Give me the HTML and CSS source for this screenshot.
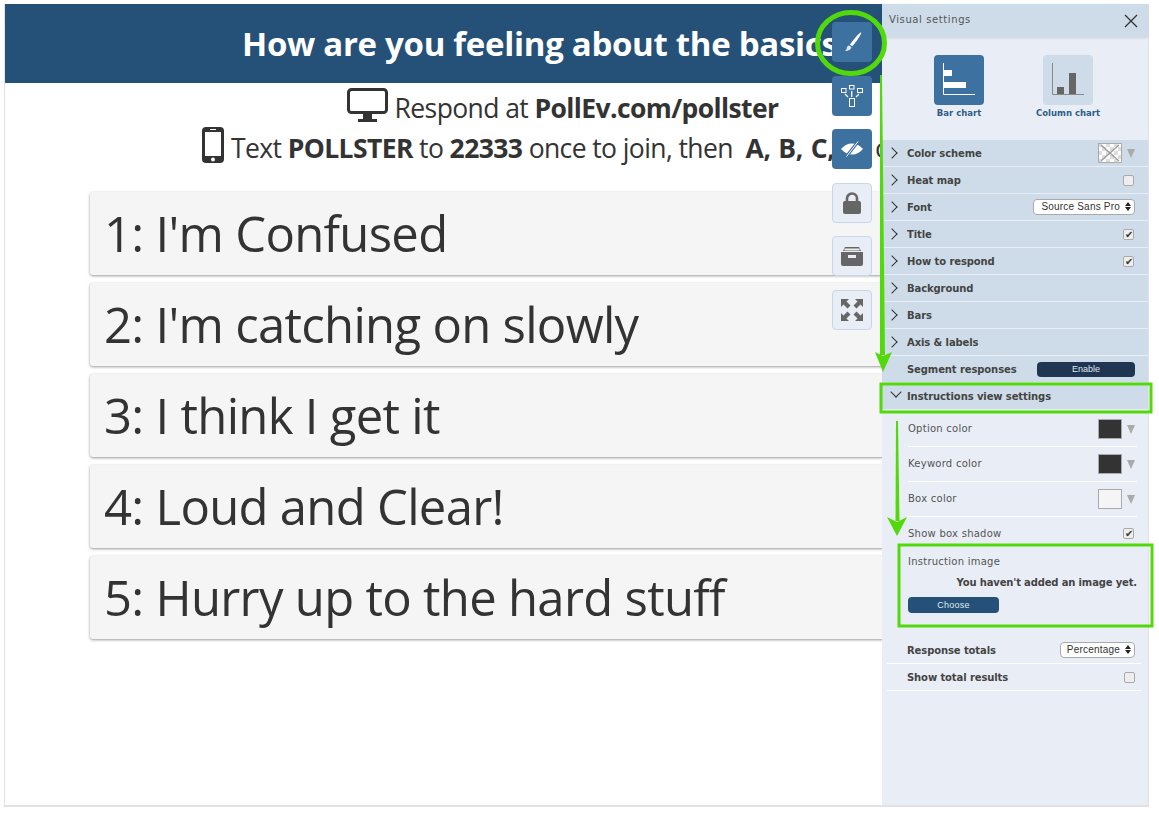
FILE: index.html
```html
<!DOCTYPE html>
<html lang="en">
<head>
    <meta charset="UTF-8">
    <title>Visual settings</title>
    <link rel="stylesheet" href="styles.css">
</head>
<body>
    <div class="frame">
        <div class="stage">
            <div class="stage-inner">
                <h1 class="title">How are you feeling about the basics?</h1>
                <div class="respond">
                    <div class="respond-line">
                        <svg width="41" height="35" viewBox="0 0 41 35"><rect x="1.500" y="1.500" width="38" height="23" rx="3" fill="none" stroke="#333" stroke-width="3"/><path d="M16 26h9v5h5v3H11v-3h5z" fill="#333"/></svg>
                        <span>Respond at <b>PollEv.com/pollster</b></span>
                    </div>
                    <div class="respond-line text-line">
                        <svg width="22" height="36" viewBox="0 0 22 36"><rect width="22" height="36" rx="4" fill="#333"/><rect x="3" y="5" width="16" height="24" fill="#fff"/><circle cx="11" cy="32.500" r="2" fill="#fff"/><rect x="8" y="2" width="6" height="1" fill="#fff"/></svg>
                        <span>Text <b>POLLSTER</b> to <b>22333</b> once to join, then &nbsp;<b class="keys">A, B, C, D,</b> or <b>E</b></span>
                    </div>
                </div>
                <div class="options">
                    <div class="option">1: I'm Confused</div>
                    <div class="option">2: I'm catching on slowly</div>
                    <div class="option">3: I think I get it</div>
                    <div class="option">4: Loud and Clear!</div>
                    <div class="option">5: Hurry up to the hard stuff</div>
                </div>
            </div>
        </div>

        <aside class="sidebar">
            <div class="side-head">
                <span>Visual settings</span>
                <svg width="14" height="14" viewBox="0 0 14 14"><path d="M1 1l12 12M13 1L1 13" stroke="#333" stroke-width="1.300" fill="none"/></svg>
            </div>
            <div class="charts">
                <div class="chart">
                    <div class="chart-tile active">
                        <svg width="50" height="50" viewBox="0 0 50 50"><path d="M9.500 8v31.500H41" fill="none" stroke="#fff"/><rect x="10" y="15" width="8" height="6" fill="#fff"/><rect x="10" y="27" width="22" height="6" fill="#fff"/></svg>
                    </div>
                    <span>Bar chart</span>
                </div>
                <div class="chart">
                    <div class="chart-tile">
                        <svg width="50" height="50" viewBox="0 0 50 50"><path d="M9.500 8v31.500H41" fill="none" stroke="#888"/><rect x="14" y="32" width="7" height="7" fill="#666"/><rect x="26" y="18" width="7" height="21" fill="#666"/></svg>
                    </div>
                    <span>Column chart</span>
                </div>
            </div>

            <div class="row"><i class="chev"></i><b>Color scheme</b>
                <svg width="24" height="20" viewBox="0 0 24 20"><defs><pattern id="chk" width="8" height="8" patternUnits="userSpaceOnUse"><rect width="8" height="8" fill="#fff"/><rect width="4" height="4" fill="#ddd"/><rect x="4" y="4" width="4" height="4" fill="#ddd"/></pattern></defs><rect x=".5" y=".5" width="23" height="19" fill="url(#chk)" stroke="#aaa"/><path d="M3 2l18 16M21 2L3 18" stroke="#999" stroke-width="1.200"/></svg>
                <i class="tri"></i>
            </div>
            <div class="row"><i class="chev"></i><b>Heat map</b><span class="check"></span></div>
            <div class="row"><i class="chev"></i><b>Font</b><span class="select">Source Sans Pro<i class="updown"></i></span></div>
            <div class="row"><i class="chev"></i><b>Title</b><span class="check on"></span></div>
            <div class="row"><i class="chev"></i><b>How to respond</b><span class="check on"></span></div>
            <div class="row"><i class="chev"></i><b>Background</b></div>
            <div class="row"><i class="chev"></i><b>Bars</b></div>
            <div class="row"><i class="chev"></i><b>Axis &amp; labels</b></div>
            <div class="row"><b>Segment responses</b><span class="btn btn-dark">Enable</span></div>
            <div class="row"><i class="chev open"></i><b>Instructions view settings</b></div>

            <div class="sub">
                <div class="sub-row"><span>Option color</span><span class="swatch dark"></span><i class="tri"></i></div>
                <div class="sub-row"><span>Keyword color</span><span class="swatch dark"></span><i class="tri"></i></div>
                <div class="sub-row"><span>Box color</span><span class="swatch"></span><i class="tri"></i></div>
                <div class="sub-row last"><span>Show box shadow</span><span class="check on"></span></div>
                <div class="image-block">
                    <span>Instruction image</span>
                    <p>You haven't added an image yet.</p>
                    <span class="btn btn-blue">Choose</span>
                </div>
            </div>

            <div class="plain-row"><b>Response totals</b><span class="select">Percentage<i class="updown"></i></span></div>
            <div class="plain-row"><b>Show total results</b><span class="check"></span></div>
        </aside>

        <div class="tools">
            <div class="tool">
                <svg width="24" height="24" viewBox="0 0 24 24"><path d="M20.500 2.500c.6-.3 1 .1.800.7C19 8 15.500 13 12.200 16.300l-2.300-1.700C12.800 10.800 16.500 5.500 20.500 2.500z" fill="#fff"/><path d="M9.200 15.500l2.300 1.700c-.6 2.600-3.300 4-6.700 3.800 1.800-1.100 1.900-2.200 2-3.200.2-1.200 1.100-2 2.400-2.300z" fill="#e3e8ef"/></svg>
            </div>
            <div class="tool">
                <svg width="22" height="22" viewBox="0 0 22 22" fill="none" stroke="#fff"><rect x=".5" y="3.500" width="4.500" height="4"/><rect x="8.500" y=".5" width="4.500" height="3.500"/><rect x="16.500" y="3.500" width="5" height="4"/><rect x="8.500" y="13.500" width="5" height="8"/><path d="M4 9l3 3M10.700 12V6M18 9l-3 3" stroke-width="1.300"/></svg>
            </div>
            <div class="tool">
                <svg width="22" height="16" viewBox="0 0 22 16"><path d="M0 8c3-3.500 6.500-5.500 11-5.500S19 4.500 22 8c-3 3.500-6.500 5.500-11 5.500S3 11.500 0 8z" fill="#fff"/><path d="M5.500 15.500L17 .5" stroke="#3d719f" stroke-width="3"/><path d="M5.500 15.500L17 .5" stroke="#fff" stroke-width="1"/></svg>
            </div>
            <div class="tool tool-light">
                <svg width="18" height="22" viewBox="0 0 18 22"><path d="M4 10V6.500a5 5 0 0 1 10 0V10" fill="none" stroke="#666" stroke-width="2.600"/><rect y="9" width="18" height="13" rx="2" fill="#666"/></svg>
            </div>
            <div class="tool tool-light">
                <svg width="22" height="20" viewBox="0 0 22 20"><path d="M2 5L4 1h14l2 4z" fill="#666"/><rect x="3.500" y="2.500" width="15" height="2" fill="#eee"/><path d="M0 6h22v12a2 2 0 0 1-2 2H2a2 2 0 0 1-2-2z" fill="#666"/><rect x="7" y="9" width="8" height="3" fill="#e9edf5"/></svg>
            </div>
            <div class="tool tool-light">
                <svg width="22" height="22" viewBox="0 0 22 22" fill="#666"><path d="M0 0h8L5.500 2.500 9.500 6.500 6.500 9.500 2.500 5.500 0 8zM22 0v8l-2.500-2.500-4 4-3-3 4-4L14 0zM0 22v-8l2.500 2.500 4-4 3 3-4 4L8 22zM22 22h-8l2.500-2.500-4-4 3-3 4 4L22 14z"/></svg>
            </div>
        </div>

        <svg class="notes" width="1159" height="815" viewBox="0 0 1159 815" fill="none" stroke="#52d90b">
            <ellipse cx="851" cy="43" rx="33.500" ry="30.500" stroke-width="5"/>
            <path d="M880 75h2l3 280h-5z" fill="#52d90b" stroke="none"/>
            <path d="M875 352l8 4 9-4-9 20z" fill="#52d90b" stroke="none"/>
            <rect x="881" y="384" width="270" height="28" stroke-width="3"/>
            <path d="M896 421h2l1.500 100h-4z" fill="#52d90b" stroke="none"/>
            <path d="M887 517l10 5 10-5-10 19z" fill="#52d90b" stroke="none"/>
            <rect x="899" y="545" width="253" height="81" stroke-width="3"/>
        </svg>
    </div>
</body>
</html>
```

FILE: styles.css
```css
/* Poll editor with the visual settings panel open */
body {
    margin: 0;
    background-color: #fff;
    font-family: "Open Sans", Arial, sans-serif;
    color: #333;
}
.frame {
    width: 1145px;
    height: 803px;
    margin: 4px 0 0 4px;
    display: flex;
    box-sizing: border-box;
    border-left: 1px solid #e2e2e2;
    border-right: 1px solid #e2e2e2;
    border-bottom: 2px solid #e2e2e2;
}

/* Poll itself, cut off by the panel */
.stage {
    width: 877px;
    overflow: hidden;
    background-color: #fff;
}
.stage-inner {
    width: 1115px;
}
.title {
    margin: 0;
    height: 79px;
    padding-right: 30px;
    background-color: #255178;
    color: #fff;
    font-size: 33px;
    font-weight: 700;
    line-height: 79px;
    text-align: center;
    white-space: nowrap;
    letter-spacing: -0.3px;
}
.respond {
    padding-top: 5px;
}
.respond-line {
    height: 40px;
    display: flex;
    justify-content: center;
    align-items: center;
    gap: 7px;
    font-size: 26.500px;
    white-space: pre;
    letter-spacing: -0.6px;
}
.respond-line svg {
    margin-top: -6px;
}
.text-line {
    padding-right: 2px;
}
.keys {
    word-spacing: 1px;
    letter-spacing: -0.3px;
}
.options {
    margin-top: 24px;
    padding-left: 85px;
    display: flex;
    flex-direction: column;
    gap: 8px;
}
.option {
    height: 83px;
    padding-left: 14px;
    background-color: #f5f5f5;
    border-radius: 3px;
    box-shadow: 0 1px 3px rgba(0,0,0,0.4);
    font-size: 49px;
    line-height: 83px;
    letter-spacing: -0.7px;
}

/* Settings panel */
.sidebar {
    width: 266px;
    background-color: #e9edf5;
    font-family: "DejaVu Sans", Verdana, sans-serif;
    font-size: 10px;
    color: #444;
}
.side-head {
    height: 33px;
    padding: 0 10px 0 7px;
    display: flex;
    justify-content: space-between;
    align-items: center;
    background-color: #cddce8;
    box-shadow: 0 1px 3px rgba(0,0,0,0.12);
    color: #555;
    letter-spacing: 0.6px;
}
.side-head span {
    padding-bottom: 2px;
}
.charts {
    height: 103px;
    display: flex;
    justify-content: center;
    gap: 59px;
    padding: 18px 3px 0 0;
    box-sizing: border-box;
}
.chart {
    width: 50px;
    display: flex;
    flex-direction: column;
    align-items: center;
    gap: 3px;
    white-space: nowrap;
    color: #2f5d86;
    font-size: 8.500px;
    font-weight: 700;
}
.chart-tile {
    width: 50px;
    height: 50px;
    border-radius: 4px;
    background-color: #cddce8;
}
.chart-tile.active {
    background-color: #3d719f;
}
.chart-tile svg {
    display: block;
}
.row {
    height: 26px;
    margin-bottom: 1px;
    padding-right: 13px;
    padding-left: 25px;
    position: relative;
    display: flex;
    align-items: center;
    background-color: #cddce8;
}
.row b {
    margin-right: auto;
    letter-spacing: -0.1px;
}
.row .check {
    margin-right: 1px;
}
.row .tri {
    margin-right: 0;
}
.chev {
    position: absolute;
    left: 6px;
    top: 8.500px;
    width: 7px;
    height: 7px;
    border-top: 1.500px solid #333;
    border-right: 1.500px solid #333;
    transform: rotate(45deg);
}
.chev.open {
    top: 4.500px;
    left: 10px;
    transform: rotate(135deg);
}
.tri {
    width: 0;
    height: 0;
    margin-left: 5px;
    margin-right: 2px;
    border-left: 4px solid transparent;
    border-right: 4px solid transparent;
    border-top: 9px solid #aaa;
}
.check {
    width: 9px;
    height: 9px;
    border: 1px solid #aaa;
    border-radius: 2px;
    background-color: #eee;
    position: relative;
}
.check.on::after {
    content: "\2714";
    position: absolute;
    left: 1px;
    top: -2px;
    font-size: 10px;
    line-height: 13px;
    color: #333;
}
.select {
    height: 14px;
    padding: 0 14px 0 7px;
    position: relative;
    border: 1px solid #aaa;
    border-radius: 4px;
    background-color: #fff;
    font-family: "Liberation Sans", Arial, sans-serif;
    font-size: 10px;
    line-height: 14px;
    letter-spacing: 0.2px;
    color: #333;
}
.updown {
    position: absolute;
    right: 3px;
    top: 2px;
    width: 0;
    height: 0;
    border-left: 3px solid transparent;
    border-right: 3px solid transparent;
    border-bottom: 4px solid #222;
}
.updown::after {
    content: "";
    position: absolute;
    left: -3px;
    top: 5px;
    border-left: 3px solid transparent;
    border-right: 3px solid transparent;
    border-top: 4px solid #222;
}
.btn {
    height: 15px;
    border-radius: 4px;
    color: #dfe7ef;
    font-family: "Liberation Sans", Arial, sans-serif;
    font-size: 9px;
    line-height: 15px;
    text-align: center;
}
.btn-dark {
    width: 98px;
    background-color: #1f3652;
}
.btn-blue {
    display: block;
    width: 91px;
    height: 16px;
    line-height: 16px;
    background-color: #255178;
}
.sub {
    padding: 2px 11px 0 26px;
    letter-spacing: 0.25px;
}
.sub-row {
    height: 34px;
    display: flex;
    align-items: center;
    border-bottom: 1px solid #fff;
    color: #555;
}
.sub-row span:first-child {
    margin-right: auto;
    padding-bottom: 2px;
}
.sub-row.last {
    height: 32px;
    border-bottom: 0;
    padding-right: 3px;
}
.sub-row.last span:first-child {
    padding-bottom: 0;
}
.swatch {
    width: 22px;
    height: 18px;
    border: 1px solid #aaa;
    background-color: #f5f5f5;
}
.swatch.dark {
    background-color: #333;
}
.image-block {
    height: 88px;
    padding-top: 7px;
    box-sizing: border-box;
    color: #555;
}
.image-block p {
    margin: 10px 0 9px;
    text-align: right;
    font-weight: 700;
    color: #444;
    letter-spacing: -0.15px;
}
.plain-row {
    height: 26px;
    margin: 0 7px 0 5px;
    padding: 0 6px 0 20px;
    display: flex;
    justify-content: space-between;
    align-items: center;
    border-bottom: 1px solid #fff;
}
.plain-row b {
    letter-spacing: -0.1px;
}
.plain-row .select {
    padding-left: 6px;
}

/* Buttons over the poll */
.tools {
    position: absolute;
    left: 832px;
    top: 22px;
    display: flex;
    flex-direction: column;
    gap: 13.500px;
}
.tool {
    width: 40px;
    height: 40px;
    display: flex;
    justify-content: center;
    align-items: center;
    border-radius: 4px;
    background-color: #3d719f;
}
.tool-light {
    box-sizing: border-box;
    background-color: #e9edf5;
    border: 1px solid #c5d8e8;
}

/* Green marks drawn over the screenshot */
.notes {
    position: absolute;
    left: 0;
    top: 0;
    pointer-events: none;
}
```
